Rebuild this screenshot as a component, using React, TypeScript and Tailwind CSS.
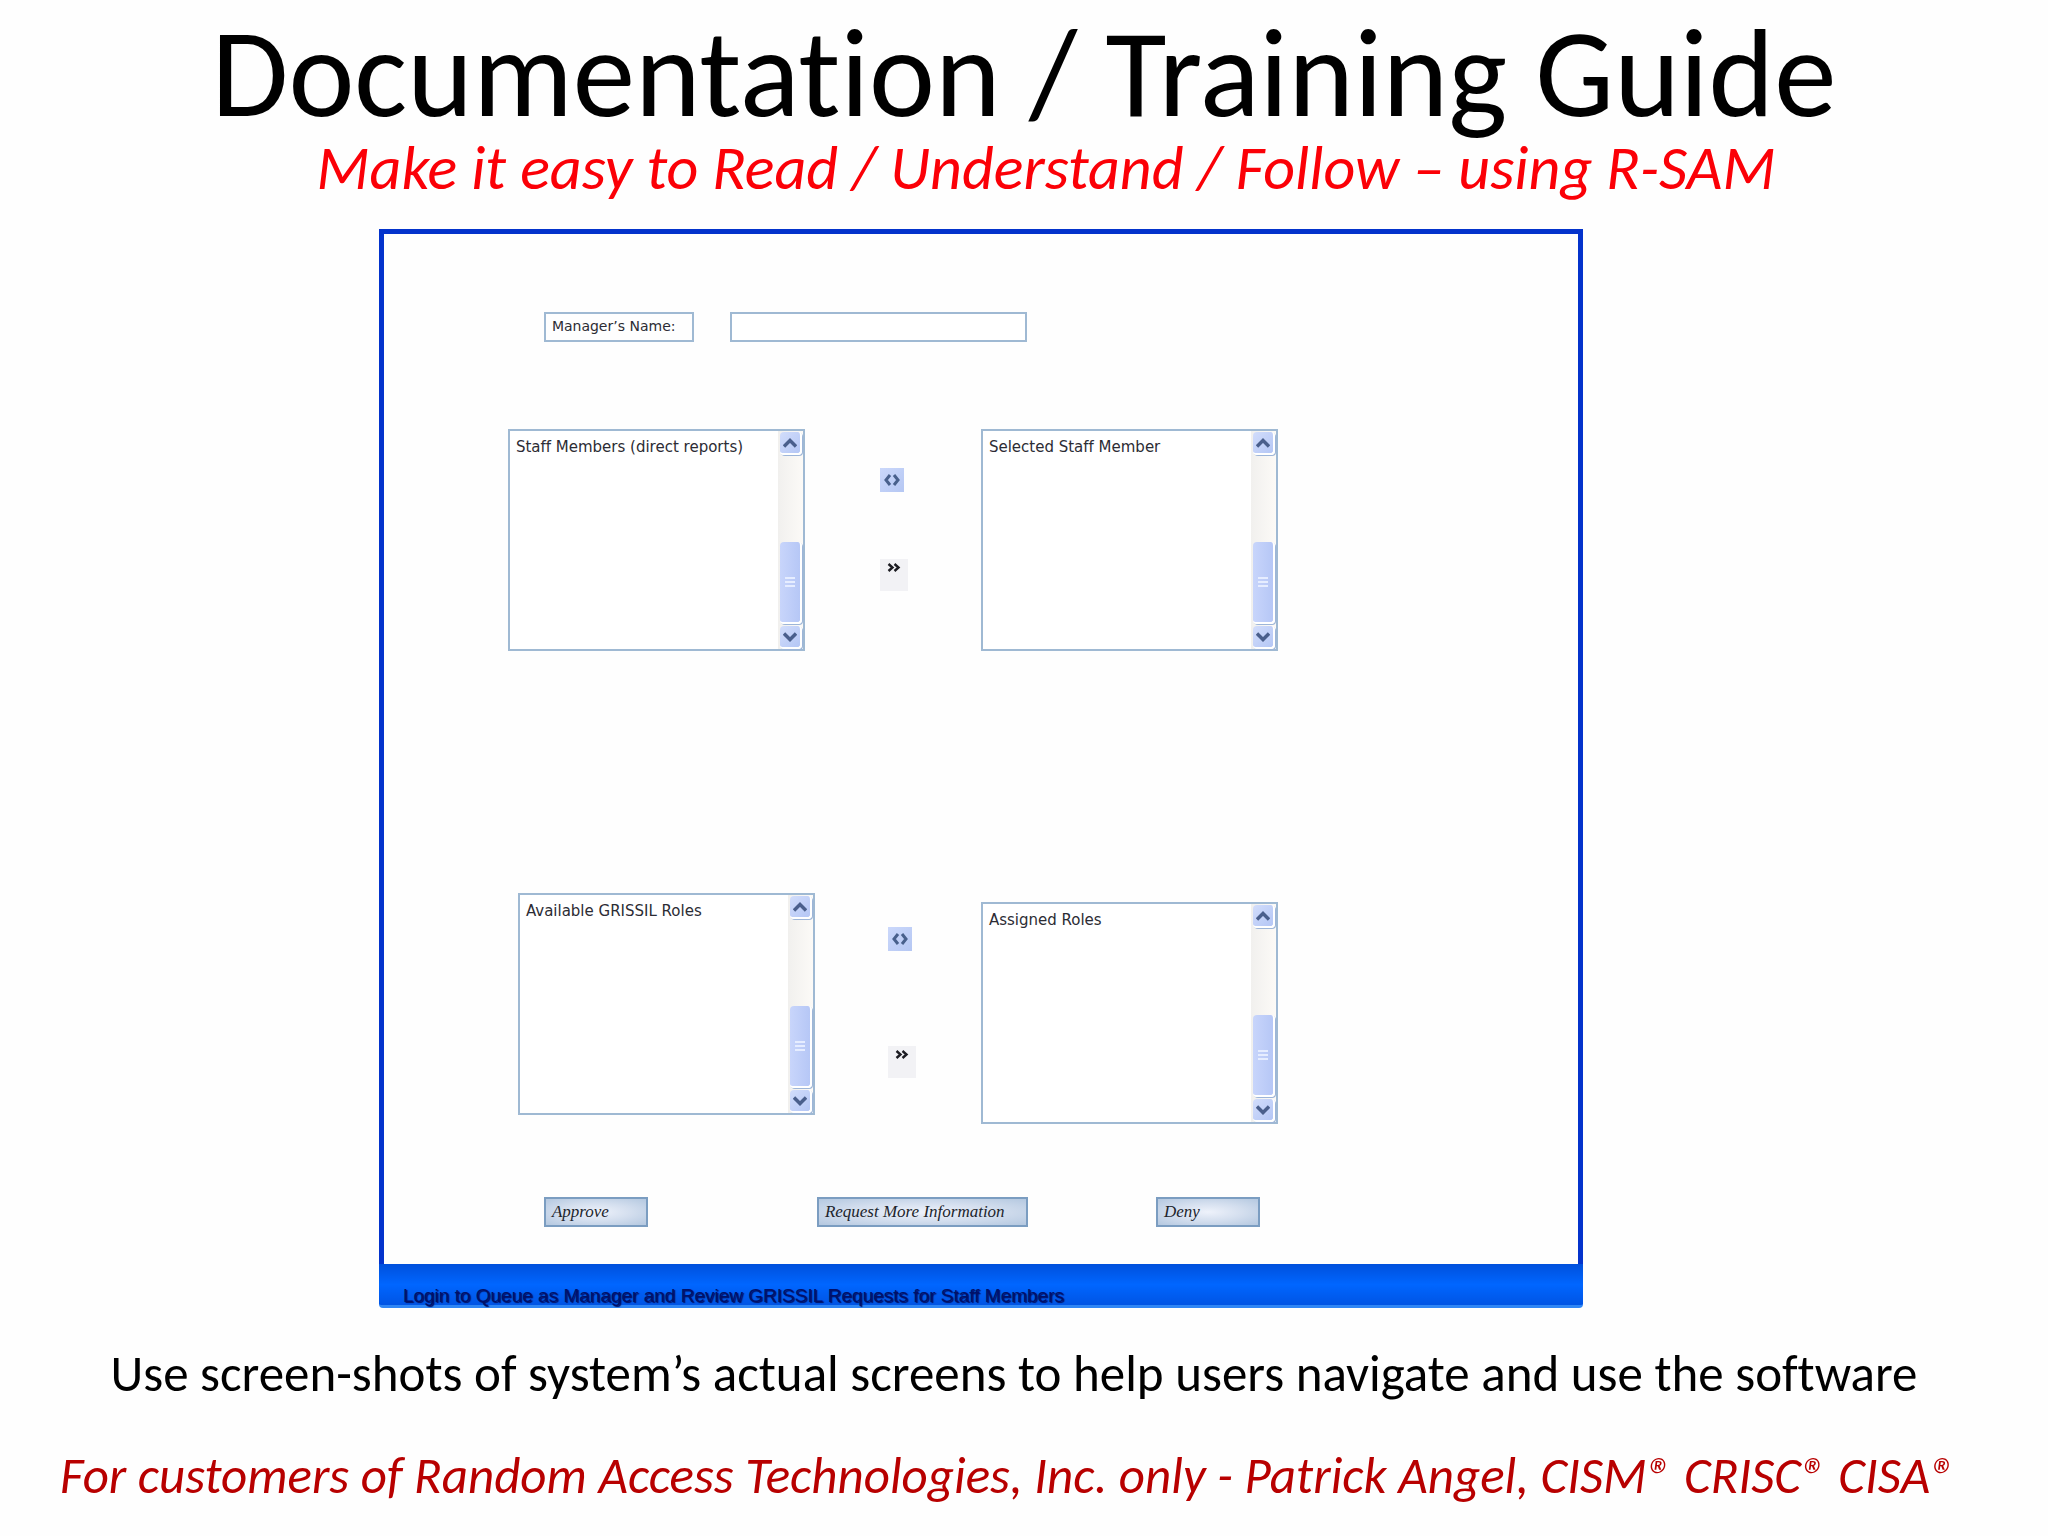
import React from "react";

function Chevron({ up = false }: { up?: boolean }) {
  return (
    <svg viewBox="0 0 14 10" className="h-[10px] w-[14px]" fill="none" stroke="#4a5f8c" strokeWidth="3.4" aria-hidden="true">
      <path d={up ? "M1 8.5 L7 2.5 L13 8.5" : "M1 1.5 L7 7.5 L13 1.5"} />
    </svg>
  );
}

function ScrollButton({ up = false }: { up?: boolean }) {
  return (
    <button
      type="button"
      aria-label={up ? "Scroll up" : "Scroll down"}
      className="flex h-[23px] shrink-0 items-center justify-center rounded-sm border-r-2 border-b-2 border-white bg-linear-to-br from-[#d2ddfb] to-[#b4c6f5] shadow-[1px_1px_0_#9db5d8]"
    >
      <Chevron up={up} />
    </button>
  );
}

function ListPanel({ title, className = "" }: { title: string; className?: string }) {
  return (
    <section aria-label={title} className={"flex h-[222px] w-[297px] border-2 border-[#9fb9d3] bg-white " + className}>
      <h2 className="flex-1 px-[6px] pt-[6px] font-[DejaVu_Sans,sans-serif] text-[15px] leading-5 whitespace-nowrap text-[#2c2c34]">{title}</h2>
      <div className="flex w-[25px] flex-col bg-linear-to-r from-[#f1f0ee] to-[#fcfaf7] pt-px pr-px pl-[2px]">
        <ScrollButton up />
        <div className="flex-1" />
        <div className="mb-[2px] flex h-[82px] flex-col items-center justify-center gap-[2px] rounded-sm border-r-2 border-b-2 border-white bg-linear-to-r from-[#c8d5fb] to-[#b6c7f6] shadow-[1px_1px_0_#9db5d8]">
          <span className="h-[2px] w-[10px] bg-[#e6edff]" />
          <span className="h-[2px] w-[10px] bg-[#e6edff]" />
          <span className="h-[2px] w-[10px] bg-[#e6edff]" />
        </div>
        <ScrollButton />
      </div>
    </section>
  );
}

function SwapButton() {
  return (
    <button type="button" aria-label="Swap" className="flex h-6 w-6 items-center justify-center bg-linear-to-br from-[#cbd8fb] to-[#b5c7f3]">
      <svg viewBox="0 0 18 14" className="h-[14px] w-[18px]" fill="none" stroke="#48608c" strokeWidth="3" aria-hidden="true">
        <path d="M7 2 L3 7 L7 12 M11 2 L15 7 L11 12" />
      </svg>
    </button>
  );
}

function MoveButton() {
  return (
    <button type="button" aria-label="Move all" className="flex h-8 w-7 justify-center bg-[#f2f2f5] pt-1">
      <svg viewBox="0 0 14 9" className="h-[9px] w-[14px]" fill="none" stroke="#1c1c22" strokeWidth="2.4" aria-hidden="true">
        <path d="M1.5 1 L5.5 4.5 L1.5 8 M7.5 1 L11.5 4.5 L7.5 8" />
      </svg>
    </button>
  );
}

function ActionButton({ label, className }: { label: string; className: string }) {
  return (
    <button
      type="button"
      className={
        "h-[30px] border-2 border-[#7b9dc1] bg-[radial-gradient(ellipse_at_center,#eef2fb_0%,#d3deee_50%,#b4c8e0_100%)] px-[6px] text-left font-[Liberation_Serif,serif] text-[17px] leading-6 whitespace-nowrap text-[#20242c] italic " +
        className
      }
    >
      {label}
    </button>
  );
}

export default function App() {
  return (
    <main className="min-h-screen bg-[#fefefe] font-[Carlito,Calibri,Lato,sans-serif] text-black [font-variant-ligatures:none]">
      <h1 className="pt-[10px] text-center text-[125px] leading-[128px] whitespace-nowrap">Documentation / Training Guide</h1>
      <p className="pl-11 text-center text-[62px] leading-[60px] whitespace-nowrap text-[#fb0007] italic">
        Make it easy to Read / Understand / Follow – using R-SAM
      </p>

      <div className="mt-[31px] ml-[18.5%] w-[58.8%] min-w-[1000px]">
        <form className="border-x-[5px] border-t-[5px] border-[#0433cc] pb-[37px] pl-[124px]" onSubmit={(e) => e.preventDefault()}>
          <div className="flex pt-[78px] pl-9">
            <label htmlFor="manager" className="h-[30px] w-[150px] border-2 border-[#9fb9d3] px-[6px] font-[DejaVu_Sans,sans-serif] text-sm leading-6 whitespace-nowrap text-[#2c2c34]">
              Manager’s Name:
            </label>
            <input id="manager" type="text" className="ml-9 h-[30px] w-[297px] border-2 border-[#9fb9d3] bg-white px-2 text-base outline-none" />
          </div>

          <div className="mt-[87px] flex">
            <ListPanel title="Staff Members (direct reports)" />
            <div className="flex w-[176px] flex-col items-start gap-[67px] pt-[39px] pl-[75px]">
              <SwapButton />
              <MoveButton />
            </div>
            <ListPanel title="Selected Staff Member" />
          </div>

          <div className="mt-[242px] flex pl-[10px]">
            <ListPanel title="Available GRISSIL Roles" />
            <div className="flex w-[166px] flex-col items-start gap-[95px] pt-[34px] pl-[73px]">
              <SwapButton />
              <MoveButton />
            </div>
            <ListPanel title="Assigned Roles" className="mt-[9px]" />
          </div>

          <div className="mt-[73px] flex pl-9">
            <ActionButton label="Approve" className="w-[104px]" />
            <ActionButton label="Request More Information" className="ml-[169px] w-[211px]" />
            <ActionButton label="Deny" className="ml-[128px] w-[104px]" />
          </div>
        </form>
        <p className="h-11 rounded-b-sm border-b-[3px] border-[#2f86f5] bg-linear-to-b from-[#0050dc] via-[#0066ff] to-[#0054e4] pt-5 pl-6 font-[Liberation_Sans,sans-serif] text-[19px] leading-6 whitespace-nowrap text-[#00106a] text-shadow-[1px_1px_1px_#001060]">
          Login to Queue as Manager and Review GRISSIL Requests for Staff Members
        </p>
      </div>

      <p className="mt-9 pr-5 text-center text-[51px] leading-[60px] whitespace-nowrap">
        Use screen-shots of system’s actual screens to help users navigate and use the software
      </p>
      <p className="mt-[42px] pr-8 text-center text-[51px] leading-[60px] whitespace-nowrap text-[#b80000] italic">
        For customers of Random Access Technologies, Inc. only - Patrick Angel, CISM® CRISC® CISA®
      </p>
    </main>
  );
}
